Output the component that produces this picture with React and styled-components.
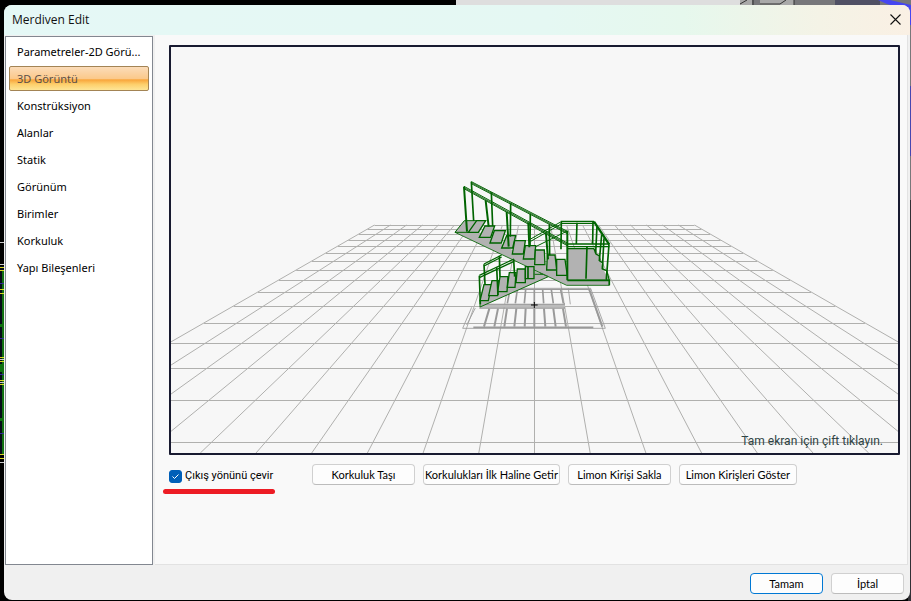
import React, { useState } from "react";
import styled, { createGlobalStyle } from "styled-components";

const GlobalStyle = createGlobalStyle`
  * {
    box-sizing: border-box;
  }

  body {
    margin: 0;
    background: #000;
    font-family: "Noto Sans", sans-serif;
    color: #000;
  }
`;

const Desktop = styled.div`
  position: relative;
  display: flex;
  min-height: 100vh;
  padding: 5px 1px 1px 4px;
`;

const Drawing = styled.svg`
  position: absolute;
  inset: 0;
  width: 100%;
  height: 100%;
`;

const Dialog = styled.section`
  position: relative;
  flex: 1;
  display: flex;
  flex-direction: column;
  background: #f0f0f0;
  border-radius: 8px;
  overflow: hidden;
`;

const TitleBar = styled.header`
  display: flex;
  align-items: center;
  justify-content: space-between;
  height: 30px;
  padding: 0 7px 1px 8px;
  background: linear-gradient(90deg, #e5f8f6 0%, #e5f8f3 60%, #e6f8ed 75%, #f4f3e6 90%, #faf0e4 100%);
`;

const Title = styled.h1`
  margin: 0;
  font: 400 12px/16px "Open Sans", sans-serif;
  color: #111;
`;

const CloseButton = styled.button`
  display: flex;
  padding: 2px;
  border: none;
  background: transparent;
`;

const Body = styled.div`
  flex: 1;
  display: flex;
  gap: 2px;
  padding: 0 2px 0 1px;
`;

const Sidebar = styled.nav`
  width: 148px;
  flex-shrink: 0;
  margin-top: 1px;
  padding: 2px 3px;
  border: 1px solid #828790;
  background: #fff;
`;

const NavItem = styled.button`
  display: block;
  width: 100%;
  height: 25px;
  margin-bottom: 2px;
  padding: 0 7px;
  border: 1px solid ${({ $active }) => ($active ? "#a38455" : "transparent")};
  border-radius: 2px;
  background: ${({ $active }) =>
    $active ? "linear-gradient(#fbdcb9 0%, #fbc98b 50%, #f9a63c 56%, #fdcf6b 75%, #fee596 100%)" : "transparent"};
  color: ${({ $active }) => ($active ? "#5c5048" : "#000")};
  font: 400 11px/16px "Noto Sans", sans-serif;
  text-align: left;
  white-space: nowrap;
`;

const Content = styled.main`
  flex: 1;
  min-width: 0;
  padding: 10px 7px 0 14px;
  border-right: 1px solid #e2e2e2;
  border-bottom: 1px solid #e2e2e2;
  background: #f9f9f9;
`;

const Viewport = styled.div`
  position: relative;
  aspect-ratio: 731 / 410;
  border: 2px solid #181a30;
  border-radius: 1px;
  background: #f7f7f7;
  overflow: hidden;
`;

const Scene = styled.svg`
  display: block;
  width: 100%;
  height: 100%;
`;

const Hint = styled.span`
  position: absolute;
  right: 15px;
  bottom: 4px;
  font: 400 12px/16px Roboto, sans-serif;
  color: #2f4444;
`;

const Controls = styled.div`
  display: flex;
  align-items: flex-start;
  gap: 8px;
  padding-top: 9px;
`;

const CheckLabel = styled.label`
  position: relative;
  display: flex;
  align-items: center;
  gap: 3px;
  width: 135px;
  height: 24px;
  font: 400 11px/16px Roboto, sans-serif;
  white-space: nowrap;

  &::after {
    content: "";
    position: absolute;
    left: -6px;
    top: 25px;
    width: 112px;
    height: 5px;
    border-radius: 3px;
    background: #ed1c24;
  }
`;

const Checkbox = styled.input`
  appearance: none;
  width: 13px;
  height: 13px;
  margin: 0;
  border: 1px solid #005fb8;
  border-radius: 3px;
  background: #fff;

  &:checked {
    background: #005fb8
      url("data:image/svg+xml,%3Csvg xmlns='http://www.w3.org/2000/svg' viewBox='0 0 11 11'%3E%3Cpath d='M2.5 5.5l2 2 4-4' fill='none' stroke='%23fff'/%3E%3C/svg%3E");
  }
`;

const Button = styled.button`
  min-width: ${({ $width }) => $width || 73}px;
  height: 21px;
  padding: 0 1px;
  border: 1px solid ${({ $primary }) => ($primary ? "#0078d4" : "#d0d0d0")};
  border-bottom-color: ${({ $primary }) => ($primary ? "#0078d4" : "#bcbcbc")};
  border-radius: 4px;
  background: #fdfdfd;
  color: #000;
  font: 400 11px/16px Lato, sans-serif;
  white-space: nowrap;
`;

const Footer = styled.footer`
  display: flex;
  justify-content: flex-end;
  gap: 8px;
  height: 35px;
  padding: 8px 6px 0;
`;

const menuItems = [
  "Parametreler-2D Görü...",
  "3D Görüntü",
  "Konstrüksiyon",
  "Alanlar",
  "Statik",
  "Görünüm",
  "Birimler",
  "Korkuluk",
  "Yapı Bileşenleri",
];

const gridRows = [225, 229, 234, 240, 246, 253, 261, 270, 280, 292, 306, 323, 343, 368, 400, 442];
const gridColumns = Array.from({ length: 21 }, (_, i) => i - 10);

const steps = [
  "85,187 110,152 137,152 115,187",
  "118,202 135,168 164,168 152,202",
  "150,219 163,182 196,182 184,219",
  "185,234 200,197 227,197 218,234",
  "217,252 224,212 256,212 250,252",
  "250,267 256,227 287,227 284,267",
  "284,284 286,240 313,240 315,284",
  "320,300 322,255 345,255 350,300",
  "350,316 350,268 375,268 382,316",
  "120,392 132,344 155,344 145,392",
  "146,377 156,332 175,332 173,377",
  "173,365 180,320 204,320 201,365",
  "202,352 208,308 228,308 225,352",
  "228,338 232,297 256,297 256,338",
  "256,326 256,290 282,290 282,326",
];

const Staircase = () => (
  <g transform="translate(440 170) scale(0.3333)" fill="none">
    {/* floor shadow */}
    <g stroke="#999" strokeWidth="3">
      <path d="M95 412L68 475H496L452 355H205M106 414L80 465M385 355L391 403" strokeWidth="2.5" />
      <path d="M205 358H452M120 403H373M118 414H375M373 400V416" strokeWidth="4" />
      <path d="M100 472H460" strokeWidth="5" />
      <path d="M448 359L487 470" strokeWidth="6" />
      <path d="M210 359L202 400M232 359L226 400M257 359L253 400M283 359V400M308 359L311 400M334 359L340 400M362 359L370 400" strokeWidth="5" />
      <path d="M148 416L132 470M174 416L163 470M201 416L193 470M229 416L223 470M257 416L254 470M283 416V470M312 416L316 470M340 416L347 470M369 416L378 470" strokeWidth="6" />
      <path d="M120 408H375" stroke="#bcbcbc" strokeWidth="7" />
    </g>
    <path d="M273 405H293M283 396V414" stroke="#000" strokeWidth="3" />

    {/* beams and landing */}
    <g fill="#b2b2b2">
      <path d="M120 392L146 377L173 365L202 350L228 338L256 326L284 311L270 295L325 320L122 411Z" />
      <path d="M45 187L73 152H110L137 152L118 187L150 203L185 222L218 240L250 255L284 272L318 286L350 302L382 318V331H508V346H380Z" />
      <path d="M384 236H462L478 265L488 295L508 331H384Z" />
    </g>
    <path d="M120 392V411L325 320L300 309M284 313H310" stroke="#0a6b0a" strokeWidth="3" />
    <path d="M45 187L380 346H508V331" stroke="#237523" strokeWidth="3" />
    <path d="M45 187L73 152H137M45 187H115" stroke="#006400" strokeWidth="3" />

    {/* treads */}
    <g fill="#b2b2b2" stroke="#006400" strokeWidth="4">
      {steps.map((points) => (
        <polygon key={points} points={points} />
      ))}
    </g>

    {/* upper railing */}
    <g stroke="#006400">
      <path d="M72 49L382 219M72 56L382 227M94 35L382 184M94 41L382 191" strokeWidth="3" />
      <path d="M72 53L382 223M94 38L382 188" stroke="#3c7e3c" strokeWidth="4" />
      <path d="M72 50L81 185M137 92L146 170M200 126L206 230M265 158L268 232M318 190L324 268M382 182V331" strokeWidth="6" />
      <path d="M94 35L101 153M154 67L158 168M212 100L211 200M271 131L270 228M328 163L329 256" strokeWidth="5" />
    </g>

    {/* landing railing */}
    <g stroke="#006400">
      <path d="M362 154H462M362 160H462M382 222H508M382 230H508M384 236H462M384 331H508" strokeWidth="4" />
      <path d="M462 155L508 224" strokeWidth="7" />
      <path d="M411 158L409 222M364 156L363 238M441 230L438 326M507 224L499 328M382 331H508V346" strokeWidth="5" />
      <path d="M459 156L458 222M471 170L467 250M485 195L478 273M492 205L487 298" strokeWidth="5" />
      <path d="M462 236L468 252L478 258L480 274L488 278V297L500 302L508 331" strokeWidth="4" />
      <path d="M272 207L362 156M272 214L362 163M285 231L382 183" strokeWidth="3" />
    </g>

    {/* lower railing */}
    <g stroke="#006400" strokeWidth="5">
      <path d="M118 316L222 267M118 323L222 274M132 282L185 255M132 288L185 261" strokeWidth="4" />
      <path d="M118 317L121 403M132 283L135 343M170 292L174 375M178 257L180 320M221 268L224 320M264 291V324" />
    </g>
  </g>
);

const Preview = () => (
  <Scene viewBox="171 47 727 406" preserveAspectRatio="xMidYMid slice" aria-label="3D Görüntü">
    <g fill="none" stroke="#b0b0ae">
      {gridRows.map((y) => {
        const half = 160 + (y - 225) * 1.739;
        return <line key={y} x1={534.5 - half} x2={534.5 + half} y1={y + 0.5} y2={y + 0.5} />;
      })}
      {gridColumns.map((n) => (
        <line key={n} x1={534.5 + n * 16} y1="225" x2={534.5 + n * 55.7} y2="453" />
      ))}
    </g>
    <Staircase />
  </Scene>
);

const Backdrop = () => (
  <Drawing viewBox="0 0 911 601" preserveAspectRatio="none" aria-hidden="true">
    <path d="M456 0H740V8H456Z" fill="#dedede" />
    <path d="M740 0H911V601H908V8H740Z" fill="#77777a" />
    <path d="M740 0h12v8h-12zM760 0h34v8h-34z" fill="#a9a9a9" />
    <path d="M740 4l7-4M753 0v6M760 4h20l6-4M794 0v6" stroke="#333" fill="none" />
    <path d="M835 0h45v8h-45z" fill="#505064" />
    <path d="M878 0h12l21 5v20h-4V10l-20-6z" fill="#4646f0" />
    <path d="M908 86h3v70h-3z" fill="#4646b0" />
    <path d="M908 200h3v401h-3z" fill="#303035" />
    <path d="M0 266h5v188h-5z" fill="#060b18" />
    <path d="M2 270h2v184h-2zM0 324h5v3h-5zM0 418h5v3h-5zM0 364h5v8h-5z" fill="#107010" />
    <path d="M0 242.500h5M0 264.500h5M0 359.500h5M0 382.500h5M0 462.500h5" stroke="#ccc" />
    <path d="M0 267.500h5M0 270.500h5M0 289.500h5M0 293.500h5M0 357.500h5M0 361.500h5M0 380.500h5M0 384.500h5M0 454.500h5M0 458.500h5" stroke="#d8d820" />
    <path d="M0 283.500h5M0 338.500h5M0 374.500h5M0 433.500h5" stroke="#303090" />
  </Drawing>
);

const App = () => {
  const [active, setActive] = useState("3D Görüntü");
  const [reversed, setReversed] = useState(true);

  return (
    <>
      <GlobalStyle />
      <Desktop>
        <Backdrop />
        <Dialog role="dialog" aria-labelledby="dialog-title">
          <TitleBar>
            <Title id="dialog-title">Merdiven Edit</Title>
            <CloseButton type="button" aria-label="Kapat">
              <svg width="11" height="11" viewBox="0 0 11 11">
                <path d="M0.500 0.500L10.500 10.500M10.500 0.500L0.500 10.500" stroke="#111" strokeWidth="1.100" />
              </svg>
            </CloseButton>
          </TitleBar>
          <Body>
            <Sidebar>
              {menuItems.map((item) => (
                <NavItem key={item} type="button" $active={item === active} onClick={() => setActive(item)}>
                  {item}
                </NavItem>
              ))}
            </Sidebar>
            <Content>
              <Viewport>
                <Preview />
                <Hint>Tam ekran için çift tıklayın.</Hint>
              </Viewport>
              <Controls>
                <CheckLabel htmlFor="reverse">
                  <Checkbox
                    id="reverse"
                    type="checkbox"
                    checked={reversed}
                    onChange={(e) => setReversed(e.target.checked)}
                  />
                  Çıkış yönünü çevir
                </CheckLabel>
                <Button type="button" $width={103}>Korkuluk Taşı</Button>
                <Button type="button" $width={133}>Korkulukları İlk Haline Getir</Button>
                <Button type="button" $width={103}>Limon Kirişi Sakla</Button>
                <Button type="button" $width={118}>Limon Kirişleri Göster</Button>
              </Controls>
            </Content>
          </Body>
          <Footer>
            <Button type="button" $primary>Tamam</Button>
            <Button type="button">İptal</Button>
          </Footer>
        </Dialog>
      </Desktop>
    </>
  );
};

export default App;
